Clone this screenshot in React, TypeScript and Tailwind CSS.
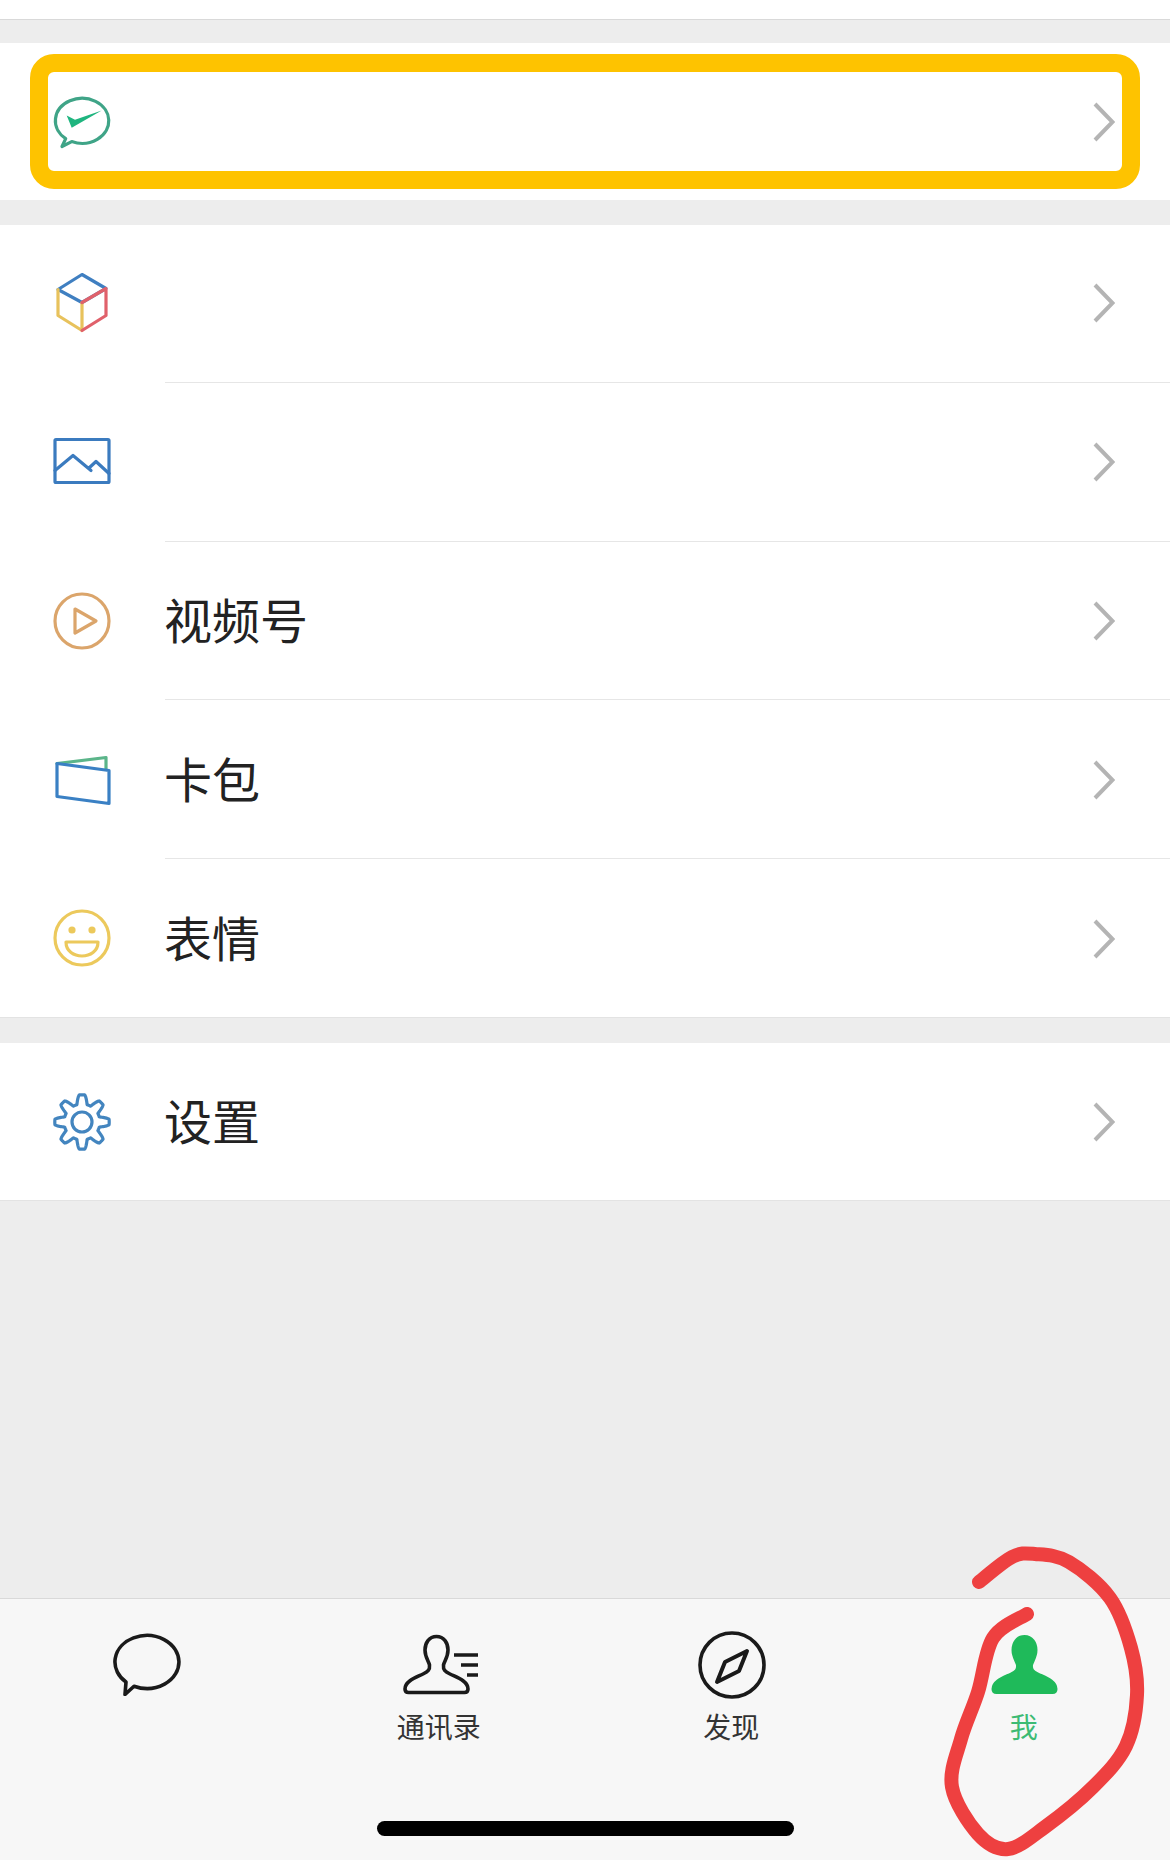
import React from 'react';

const font = { fontFamily: '"Noto Sans CJK SC", "Noto Sans", sans-serif' };

const personPath =
  'M39.5 4.5C47 4.5 51 11 51 18C51 25 47.5 29 46.5 33C46 38 48 39.5 53 42C60 45.5 71 49 71 57C71 59.5 69.5 60.5 67.5 60.5H11.5C9.5 60.5 8 59.5 8 57C8 49 19 45.5 26 42C31 39.5 33 38 32.5 33C31.5 29 28 25 28 18C28 11 32 4.5 39.5 4.5Z';

// gear outline: eight squared-off teeth around the ring
const gearPath = (() => {
  const pts: string[] = [];
  for (let i = 0; i < 320; i++) {
    const t = (i / 320) * Math.PI * 2;
    const wave = Math.max(-1, Math.min(1, 1.5 * Math.cos(8 * t)));
    const r = 22.6 + 4.6 * wave;
    pts.push(`${(32 + r * Math.sin(t)).toFixed(2)} ${(32 - r * Math.cos(t)).toFixed(2)}`);
  }
  return `M${pts.join('L')}Z`;
})();

// red hand-drawn circle around the last tab, page coordinates
const scribble: [number, number][] = [
  [979, 1582], [1012, 1557], [1035, 1554], [1069, 1562], [1110, 1598], [1131, 1648], [1137, 1695],
  [1126, 1746], [1093, 1787], [1045, 1827], [1008, 1849], [978, 1834], [952, 1787], [961, 1739],
  [978, 1692], [993, 1638], [1027, 1614],
];

function smooth(p: [number, number][]) {
  let d = `M${p[0][0]} ${p[0][1]}`;
  for (let i = 0; i < p.length - 1; i++) {
    const a = p[Math.max(i - 1, 0)];
    const b = p[i];
    const c = p[i + 1];
    const e = p[Math.min(i + 2, p.length - 1)];
    d += `C${b[0] + (c[0] - a[0]) / 6} ${b[1] + (c[1] - a[1]) / 6} ${c[0] - (e[0] - b[0]) / 6} ${c[1] - (e[1] - b[1]) / 6} ${c[0]} ${c[1]}`;
  }
  return d;
}

const Icon = ({ children }: { children: React.ReactNode }) => (
  <svg width="64" height="64" viewBox="0 0 64 64" fill="none" strokeWidth="3.2" strokeLinejoin="round" strokeLinecap="round" className="overflow-visible">
    {children}
  </svg>
);

const WechatIcon = () => (
  <Icon>
    <path d="M12 56.5L15.7 48.6A26.7 22.5 0 1 1 21.7 51.56Z" stroke="#3fa487" />
    <path d="M16.7 25.5L21.7 37.8L51.7 20.5L25 29.8Z" fill="#1fb57f" />
  </Icon>
);

const CubeIcon = () => (
  <Icon>
    <path d="M32 2.5L56 16.5L32 30.5L8 17.5Z" stroke="#3f7fc1" />
    <path d="M8 17.5V43.5L32 58.5V30.5" stroke="#e8c25c" />
    <path d="M32 58.5L56 43.5V16.5L32 30.5" stroke="#e0616b" />
  </Icon>
);

const PictureIcon = () => (
  <Icon>
    <rect x="5" y="9.5" width="54" height="43" rx="1" stroke="#3b7bbf" />
    <path d="M5 40.5L23 25.5L41 40.5M39 38L46 31.5L59 43.5" stroke="#3b7bbf" />
  </Icon>
);

const PlayIcon = () => (
  <Icon>
    <circle cx="32" cy="31" r="27" stroke="#dba56b" />
    <path d="M25 19L46 31L25 43Z" stroke="#dba56b" />
  </Icon>
);

const CardIcon = () => (
  <Icon>
    <path d="M7 14.5L56 8.5V20.5" stroke="#5bb58a" />
    <path d="M7 14.5L59 21.5V54.5L7 47.5Z" stroke="#3a80c4" />
  </Icon>
);

const SmileIcon = () => (
  <Icon>
    <circle cx="32" cy="31" r="27" stroke="#ecc95c" />
    <circle cx="22" cy="23" r="3.6" fill="#ecc95c" />
    <circle cx="42" cy="23" r="3.6" fill="#ecc95c" />
    <path d="M16 35H48C48 44.5 40 49 32 49C24 49 16 44.5 16 35Z" stroke="#ecc95c" />
  </Icon>
);

const GearIcon = () => (
  <Icon>
    <path d={gearPath} stroke="#4385bf" />
    <circle cx="32" cy="32" r="10" stroke="#4385bf" />
  </Icon>
);

const Chevron = ({ low }: { low?: boolean }) => (
  <svg width="22" height="40" viewBox="0 0 22 40" fill="none" className={`mr-[55px] shrink-0 ${low ? 'mt-[2px]' : ''}`}>
    <path d="M2 2L19.5 20L2 38" stroke="#b4b4b4" strokeWidth="4" />
  </svg>
);

function Row({ icon, label, divider, low, height }: { icon: React.ReactNode; label?: string; divider?: boolean; low?: boolean; height: string }) {
  return (
    <div className={`flex items-stretch bg-white ${height}`}>
      <div className={`w-[165px] shrink-0 pl-[50px] flex items-center ${low ? 'pt-[2px]' : ''}`}>{icon}</div>
      <div className={`flex-1 flex items-center justify-between ${divider ? 'border-b border-[#e6e6e6]' : ''}`}>
        <span className="text-[48px] leading-none text-[#222222] -ml-[1px] pb-[5px]">{label}</span>
        <Chevron low={low} />
      </div>
    </div>
  );
}

function Tab({ icon, label, active }: { icon: React.ReactNode; label?: string; active?: boolean }) {
  return (
    <div className="flex flex-col items-center pt-[33px]">
      {icon}
      <span className={`mt-[13px] h-[34px] text-[28px] leading-[34px] ${active ? 'text-[#3dbb74]' : 'text-[#333333]'}`}>{label}</span>
    </div>
  );
}

export default function App() {
  return (
    <div className="relative w-[1170px] h-[1860px] flex flex-col bg-[#ededed] overflow-hidden" style={font}>
      <div className="h-[20px] bg-white border-b border-[#d9d9d9]" />

      <div className="relative mt-[23px]">
        <Row icon={<WechatIcon />} height="h-[157px]" />
        {/* yellow marker drawn over the first row */}
        <div className="absolute left-[30px] top-[11px] w-[1110px] h-[135px] border-[18px] border-[#fec300] rounded-[24px]" />
      </div>

      <div className="mt-[25px] h-[793px] flex flex-col border-b border-[#e3e3e3]">
        <Row icon={<CubeIcon />} height="h-[158px]" divider />
        <Row icon={<PictureIcon />} height="h-[159px]" divider />
        <Row icon={<PlayIcon />} label="视频号" height="h-[159px]" divider low />
        <Row icon={<CardIcon />} label="卡包" height="h-[159px]" divider low />
        <Row icon={<SmileIcon />} label="表情" height="h-[158px]" low />
      </div>

      <div className="mt-[25px] border-b border-[#e3e3e3]">
        <Row icon={<GearIcon />} label="设置" height="h-[157px]" />
      </div>

      <div className="flex-1" />

      <div className="h-[262px] flex flex-col bg-[#f7f7f7] border-t border-[#d9d9d9]">
        <div className="flex-1 grid grid-cols-4">
          <Tab
            icon={
              <svg width="72" height="64" viewBox="0 0 72 64" fill="none">
                <path d="M16 50A32 26.5 0 1 1 24 54.2L15 62.5Z" stroke="#1a1a1a" strokeWidth="3.6" strokeLinejoin="round" />
              </svg>
            }
          />
          <Tab
            label="通讯录"
            icon={
              <svg width="84" height="64" viewBox="0 0 84 64" fill="none" stroke="#1a1a1a" strokeWidth="3.6">
                <path d={personPath} strokeLinejoin="round" />
                <path d="M57 23H81M64 33H81M70 43H81" />
              </svg>
            }
          />
          <Tab
            label="发现"
            icon={
              <svg width="84" height="64" viewBox="0 0 84 64" fill="none" stroke="#1a1a1a" strokeWidth="3.6" className="overflow-visible">
                <circle cx="43" cy="33" r="32" />
                <path d="M58 19L36 30L28 50L50 39Z" strokeWidth="4" strokeLinejoin="round" />
              </svg>
            }
          />
          <Tab
            active
            label="我"
            icon={
              <svg width="84" height="64" viewBox="0 0 84 64">
                <path d={personPath} transform="translate(3 0)" fill="#1fba5a" stroke="#1fba5a" strokeWidth="3" strokeLinejoin="round" />
              </svg>
            }
          />
        </div>
        <div className="w-[417px] h-[15px] mx-auto mb-[24px] rounded-full bg-black" />
      </div>

      {/* red hand-drawn annotation on top of the tab bar */}
      <svg className="absolute left-0 top-0 pointer-events-none" width="1170" height="1860" viewBox="0 0 1170 1860" fill="none">
        <path d={smooth(scribble)} stroke="#ee4040" strokeWidth="14" strokeLinecap="round" strokeLinejoin="round" />
      </svg>
    </div>
  );
}
